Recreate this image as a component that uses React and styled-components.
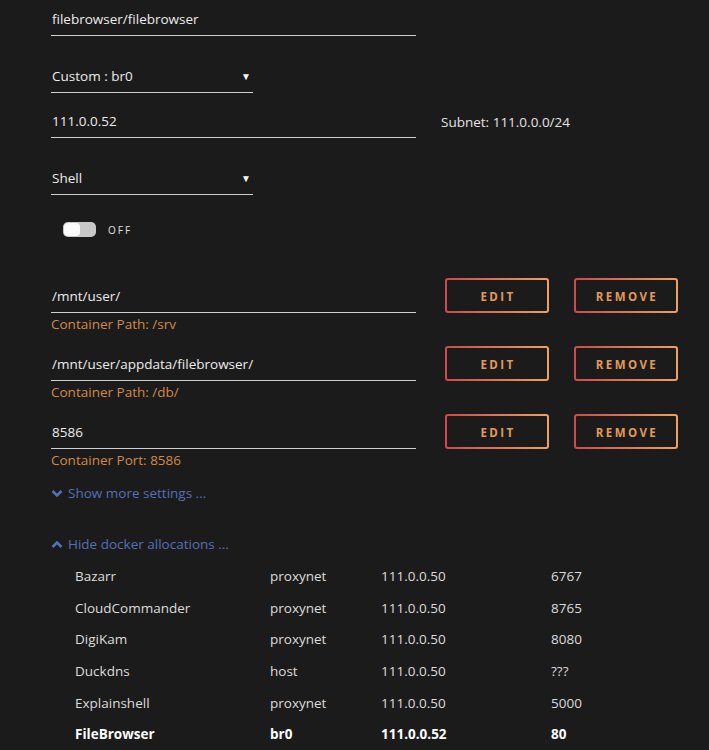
import styled, { createGlobalStyle } from 'styled-components'

const GlobalStyle = createGlobalStyle`
  html, body {
    margin: 0;
    background: #1c1b1b;
  }
  body {
    font-family: "Open Sans", "Noto Sans", sans-serif;
    color: #e4e4e4;
    font-size: 13.5px;
  }
`

const Page = styled.div`
  padding: 1px 0 0 51px;
  min-height: 749px;
  box-sizing: border-box;
`

const FormRow = styled.div`
  display: flex;
  align-items: flex-start;
  margin-top: ${p => p.$top || 0}px;
`

const FieldWrap = styled.div`
  display: flex;
  flex-direction: column;
  width: ${p => (p.$short ? 202 : 365)}px;
`

const Field = styled.div`
  display: flex;
  align-items: center;
  justify-content: space-between;
  height: 35px;
  box-sizing: border-box;
  padding: 2px 0 0 1px;
  border-bottom: 1.5px solid #cfcfcf;
  font-size: 13.5px;
  color: #ececec;
`

const Caret = styled.span`
  font-size: 10px;
  margin-right: 2px;
  color: #f4f4f4;
`

const Hint = styled.div`
  margin-top: 3px;
  font-size: 13.5px;
  line-height: 17px;
  color: #d08a45;
`

const Aside = styled.div`
  margin-left: 25px;
  height: 35px;
  padding-top: 2px;
  box-sizing: border-box;
  display: flex;
  align-items: center;
  font-size: 13.5px;
  color: #e4e4e4;
`

const Buttons = styled.div`
  display: flex;
  gap: 25px;
  margin-left: 29px;
`

const Button = styled.button`
  width: 104px;
  height: 35px;
  box-sizing: border-box;
  border: 2px solid transparent;
  border-radius: 3px;
  background:
    linear-gradient(#1c1b1b, #1c1b1b) padding-box,
    linear-gradient(90deg, #d0484a, #f0a060) border-box;
  color: #e49a58;
  font-family: "Open Sans", "Noto Sans", sans-serif;
  font-weight: 700;
  font-size: 11.5px;
  letter-spacing: 2.4px;
  padding: 2px 0 0 2px;
`

const ToggleRow = styled.div`
  display: flex;
  align-items: center;
  gap: 12px;
  margin: 27px 0 0 12px;
`

const Track = styled.div`
  width: 33px;
  height: 15px;
  border-radius: 5px;
  background: #c8c8c8;
  display: flex;
  align-items: center;
  padding: 0 1px;
  box-sizing: border-box;
`

const Knob = styled.div`
  width: 16px;
  height: 13px;
  border-radius: 4px;
  background: #fafafa;
`

const ToggleLabel = styled.span`
  font-size: 10px;
  letter-spacing: 2px;
  color: #e0e0e0;
`

const Link = styled.div`
  display: flex;
  align-items: center;
  gap: 5px;
  margin-top: ${p => p.$top}px;
  font-size: 13.5px;
  color: #5271b8;
`

const Table = styled.div`
  margin: 7px 0 0 24px;
`

const TRow = styled.div`
  display: grid;
  grid-template-columns: 195px 111px 170px 80px;
  height: 31.7px;
  align-items: center;
  font-size: 13.5px;
  color: ${p => (p.$current ? '#ffffff' : '#dcdcdc')};
  font-weight: ${p => (p.$current ? 700 : 400)};
`

const Chevron = ({ up }) => (
  <svg width="12" height="9" viewBox="0 0 12 9">
    <polyline
      points={up ? '1.5,7 6,2.5 10.5,7' : '1.5,2 6,6.5 10.5,2'}
      fill="none"
      stroke="#5271b8"
      strokeWidth="2.6"
    />
  </svg>
)

const paths = [
  { host: '/mnt/user/', hint: 'Container Path: /srv' },
  { host: '/mnt/user/appdata/filebrowser/', hint: 'Container Path: /db/' },
  { host: '8586', hint: 'Container Port: 8586' },
]

const allocations = [
  ['Bazarr', 'proxynet', '111.0.0.50', '6767'],
  ['CloudCommander', 'proxynet', '111.0.0.50', '8765'],
  ['DigiKam', 'proxynet', '111.0.0.50', '8080'],
  ['Duckdns', 'host', '111.0.0.50', '???'],
  ['Explainshell', 'proxynet', '111.0.0.50', '5000'],
  ['FileBrowser', 'br0', '111.0.0.52', '80'],
]

export default function App() {
  return (
    <Page>
      <GlobalStyle />
      <FormRow>
        <FieldWrap>
          <Field>filebrowser/filebrowser</Field>
        </FieldWrap>
      </FormRow>
      <FormRow $top={22}>
        <FieldWrap $short>
          <Field>Custom : br0<Caret>▼</Caret></Field>
        </FieldWrap>
      </FormRow>
      <FormRow $top={10}>
        <FieldWrap>
          <Field>111.0.0.52</Field>
        </FieldWrap>
        <Aside>Subnet: 111.0.0.0/24</Aside>
      </FormRow>
      <FormRow $top={22}>
        <FieldWrap $short>
          <Field>Shell<Caret>▼</Caret></Field>
        </FieldWrap>
      </FormRow>
      <ToggleRow>
        <Track><Knob /></Track>
        <ToggleLabel>OFF</ToggleLabel>
      </ToggleRow>
      {paths.map((p, i) => (
        <FormRow key={p.host} $top={i === 0 ? 41 : 13}>
          <FieldWrap>
            <Field>{p.host}</Field>
            <Hint>{p.hint}</Hint>
          </FieldWrap>
          <Buttons>
            <Button>EDIT</Button>
            <Button>REMOVE</Button>
          </Buttons>
        </FormRow>
      ))}
      <Link $top={15}><Chevron />Show more settings ...</Link>
      <Link $top={33}><Chevron up />Hide docker allocations ...</Link>
      <Table>
        {allocations.map(row => (
          <TRow key={row[0]} $current={row[0] === 'FileBrowser'}>
            {row.map(c => <span key={c}>{c}</span>)}
          </TRow>
        ))}
      </Table>
    </Page>
  )
}
